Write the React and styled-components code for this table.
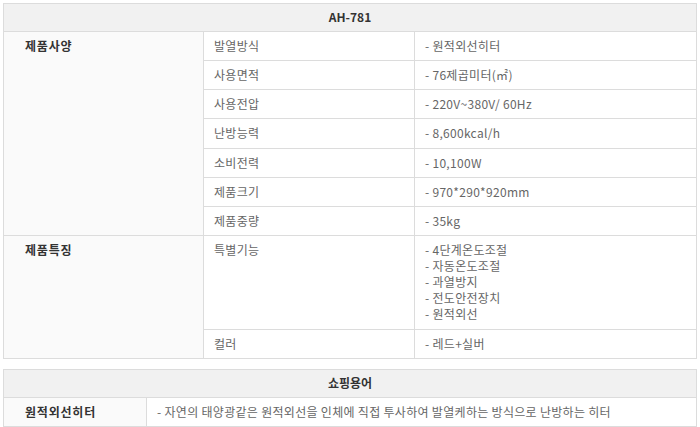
import React from "react";
import styled, { createGlobalStyle } from "styled-components";

const Global = createGlobalStyle`
  html, body { margin: 0; padding: 0; background: #fff; }
  body { font-family: "Noto Sans CJK KR", "Noto Sans", sans-serif; font-size: 12px; color: #666; }
`;

const Page = styled.div`
  padding: 3px 3px 0 3px;
  display: flex;
  flex-direction: column;
  gap: 10px;
`;

const Table = styled.table`
  width: 694px;
  border-collapse: collapse;
  table-layout: fixed;
  border: 1px solid #dcdcdc;
`;

const HeadCell = styled.th`
  background: #f1f1f1;
  border: 1px solid #dcdcdc;
  color: #333;
  font-weight: bold;
  font-size: 12px;
  line-height: 16px;
  padding: 5px 0 6px;
  text-align: center;
`;

const LabelCell = styled.td`
  background: #fafafa;
  border: 1px solid #dcdcdc;
  color: #333;
  font-weight: bold;
  font-size: 12px;
  line-height: 16px;
  padding: 6px 0 6px 21px;
  vertical-align: top;
  letter-spacing: 0.8px;
`;

const Cell = styled.td`
  border: 1px solid #dcdcdc;
  color: #666;
  font-size: 12px;
  line-height: 16px;
  letter-spacing: 0.3px;
  padding: ${(p) => (p.$tall ? "6px 0 7px 10px" : "6px 0 6px 10px")};
  vertical-align: top;
`;

const Lines = styled.div`
  display: flex;
  flex-direction: column;
`;

const specs = [
  ["발열방식", ["- 원적외선히터"]],
  ["사용면적", ["- 76제곱미터(㎡)"]],
  ["사용전압", ["- 220V~380V/ 60Hz"]],
  ["난방능력", ["- 8,600kcal/h"], true],
  ["소비전력", ["- 10,100W"]],
  ["제품크기", ["- 970*290*920mm"]],
  ["제품중량", ["- 35kg"]],
];

const features = [
  ["특별기능", ["- 4단계온도조절", "- 자동온도조절", "- 과열방지", "- 전도안전장치", "- 원적외선"], true],
  ["컬러", ["- 레드+실버"]],
];

function Group({ title, rows }) {
  return rows.map(([k, vals, tall], i) => (
    <tr key={k}>
      {i === 0 && <LabelCell rowSpan={rows.length}>{title}</LabelCell>}
      <Cell $tall={tall}>{k}</Cell>
      <Cell $tall={tall}>
        <Lines>
          {vals.map((v) => (
            <span key={v}>{v}</span>
          ))}
        </Lines>
      </Cell>
    </tr>
  ));
}

export default function App() {
  return (
    <>
      <Global />
      <Page>
        <Table>
          <colgroup>
            <col style={{ width: 200 }} />
            <col style={{ width: 211 }} />
            <col />
          </colgroup>
          <thead>
            <tr>
              <HeadCell colSpan={3}>AH-781</HeadCell>
            </tr>
          </thead>
          <tbody>
            <Group title="제품사양" rows={specs} />
            <Group title="제품특징" rows={features} />
          </tbody>
        </Table>
        <Table>
          <colgroup>
            <col style={{ width: 143 }} />
            <col />
          </colgroup>
          <thead>
            <tr>
              <HeadCell colSpan={2}>쇼핑용어</HeadCell>
            </tr>
          </thead>
          <tbody>
            <tr>
              <LabelCell>원적외선히터</LabelCell>
              <Cell>- 자연의 태양광같은 원적외선을 인체에 직접 투사하여 발열케하는 방식으로 난방하는 히터</Cell>
            </tr>
          </tbody>
        </Table>
      </Page>
    </>
  );
}
